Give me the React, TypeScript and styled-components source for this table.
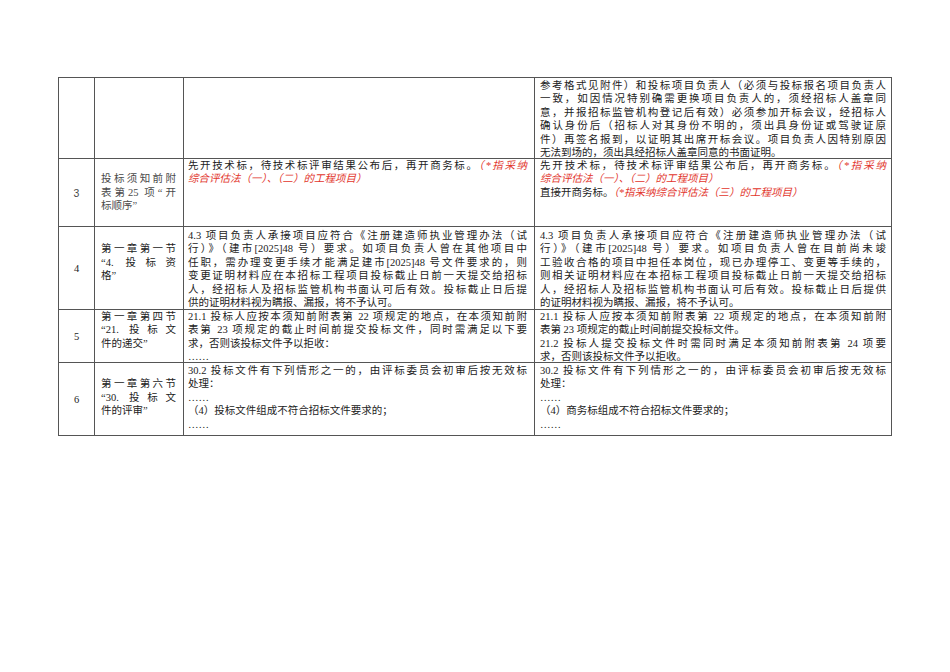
import React from "react";
import styled, { createGlobalStyle } from "styled-components";

const Global = createGlobalStyle`
  html, body { margin: 0; padding: 0; background: #ffffff; }
  body { font-family: "Liberation Serif", "Noto Sans CJK SC", serif; }
`;

const LH = 13.4;

const Page = styled.div`
  width: 950px;
  height: 672px;
  box-sizing: border-box;
  padding: 77px 0 0 58px;
  background: #ffffff;
`;

const Table = styled.div`
  display: grid;
  grid-template-columns: 35px 88px 350px 356px;
  grid-template-rows: 80px 67px 82px 52px 72px;
  gap: 1px;
  padding: 1px;
  width: max-content;
  background: #555555;
`;

const NumCell = styled.div<{ $sans?: boolean }>`
  display: flex;
  align-items: center;
  justify-content: center;
  background: #ffffff;
  font-family: ${(p) =>
    p.$sans
      ? `"Liberation Sans", "Noto Sans CJK SC", sans-serif`
      : `"Liberation Serif", "Noto Sans CJK SC", serif`};
  font-size: 10.5px;
  color: ${(p) => (p.$sans ? "#4a4a4a" : "#222222")};
`;

const TitleCell = styled.div<{ $pt: number; $muted?: boolean }>`
  background: #ffffff;
  box-sizing: border-box;
  padding: ${(p) => p.$pt}px 7px 0 6px;
  overflow: hidden;
  font-size: 10.5px;
  color: ${(p) => (p.$muted ? "#4a4a4a" : "#222222")};
`;

const TextCell = styled.div<{ $pt: number; $pl: number; $pr: number }>`
  background: #ffffff;
  box-sizing: border-box;
  padding: ${(p) => p.$pt}px ${(p) => p.$pr}px 0 ${(p) => p.$pl}px;
  overflow: hidden;
  font-size: 10.5px;
  color: #222222;
`;

const TextLine = styled.div<{ $justify: boolean }>`
  height: ${LH}px;
  line-height: ${LH}px;
  text-align: ${(p) => (p.$justify ? "justify" : "left")};
  text-align-last: ${(p) => (p.$justify ? "justify" : "left")};
`;

const RedText = styled.span`
  color: #e2352c;
  font-style: italic;
`;

type Seg = { text: string; red?: boolean };
type Line = { segs: Seg[]; justify: boolean };

const toSegs = (parts: (string | Seg)[]): Seg[] =>
  parts.map((s) => (typeof s === "string" ? { text: s } : s));
const J = (...parts: (string | Seg)[]): Line => ({ segs: toSegs(parts), justify: true });
const P = (...parts: (string | Seg)[]): Line => ({ segs: toSegs(parts), justify: false });
const R = (text: string): Seg => ({ text, red: true });

type Row = {
  pt: number;
  num: string;
  sans?: boolean;
  title: Line[];
  titleOffset: number;
  left: Line[];
  right: Line[];
};

const rows: Row[] = [
  {
    pt: 1,
    num: "",
    title: [],
    titleOffset: 0,
    left: [],
    right: [
      J("参考格式见附件）和投标项目负责人（必须与投标报名项目负责人"),
      J("一致，如因情况特别确需更换项目负责人的，须经招标人盖章同"),
      J("意，并报招标监管机构登记后有效）必须参加开标会议，经招标人"),
      J("确认身份后（招标人对其身份不明的，须出具身份证或驾驶证原"),
      J("件）再签名报到，以证明其出席开标会议。项目负责人因特别原因"),
      P("无法到场的，须出具经招标人盖章同意的书面证明。"),
    ],
  },
  {
    pt: 0,
    num: "3",
    sans: true,
    title: [J("投标须知前附"), J("表第25 项“开"), P("标顺序”")],
    titleOffset: 1,
    left: [
      J("先开技术标，待技术标评审结果公布后，再开商务标。", R("（*指采纳")),
      P(R("综合评估法（一）、（二）的工程项目）")),
    ],
    right: [
      J("先开技术标，待技术标评审结果公布后，再开商务标。", R("（*指采纳")),
      P(R("综合评估法（一）、（二）的工程项目）")),
      P("直接开商务标。", R("（*指采纳综合评估法（三）的工程项目）")),
    ],
  },
  {
    pt: 2,
    num: "4",
    title: [J("第一章第一节"), J("“4. 投标资"), P("格”")],
    titleOffset: 1,
    left: [
      J("4.3 项目负责人承接项目应符合《注册建造师执业管理办法（试"),
      J("行）》（建市[2025]48 号）要求。如项目负责人曾在其他项目中"),
      J("任职，需办理变更手续才能满足建市[2025]48 号文件要求的，则"),
      J("变更证明材料应在本招标工程项目投标截止日前一天提交给招标"),
      J("人，经招标人及招标监管机构书面认可后有效。投标截止日后提"),
      P("供的证明材料视为瞒报、漏报，将不予认可。"),
    ],
    right: [
      J("4.3 项目负责人承接项目应符合《注册建造师执业管理办法（试"),
      J("行）》（建市[2025]48 号）要求。如项目负责人曾在目前尚未竣"),
      J("工验收合格的项目中担任本岗位，现已办理停工、变更等手续的，"),
      J("则相关证明材料应在本招标工程项目投标截止日前一天提交给招标"),
      J("人，经招标人及招标监管机构书面认可后有效。投标截止日后提供"),
      P("的证明材料视为瞒报、漏报，将不予认可。"),
    ],
  },
  {
    pt: 0,
    num: "5",
    title: [J("第一章第四节"), J("“21. 投标文"), P("件的递交”")],
    titleOffset: 0,
    left: [
      J("21.1 投标人应按本须知前附表第 22 项规定的地点，在本须知前附"),
      J("表第 23 项规定的截止时间前提交投标文件，同时需满足以下要"),
      P("求，否则该投标文件予以拒收："),
      P("……"),
    ],
    right: [
      J("21.1 投标人应按本须知前附表第 22 项规定的地点，在本须知前附"),
      P("表第 23 项规定的截止时间前提交投标文件。"),
      J("21.2 投标人提交投标文件时需同时满足本须知前附表第 24 项要"),
      P("求，否则该投标文件予以拒收。"),
    ],
  },
  {
    pt: 1,
    num: "6",
    title: [J("第一章第六节"), J("“30. 投标文"), P("件的评审”")],
    titleOffset: 1,
    left: [
      J("30.2 投标文件有下列情形之一的，由评标委员会初审后按无效标"),
      P("处理："),
      P("……"),
      P("（4）投标文件组成不符合招标文件要求的；"),
      P("……"),
    ],
    right: [
      J("30.2 投标文件有下列情形之一的，由评标委员会初审后按无效标"),
      P("处理："),
      P("……"),
      P("（4）商务标组成不符合招标文件要求的；"),
      P("……"),
    ],
  },
];

const renderLines = (lines: Line[]) =>
  lines.map((ln, i) => (
    <TextLine key={i} $justify={ln.justify}>
      {ln.segs.map((s, k) =>
        s.red ? <RedText key={k}>{s.text}</RedText> : <React.Fragment key={k}>{s.text}</React.Fragment>
      )}
    </TextLine>
  ));

export default function App() {
  return (
    <Page>
      <Global />
      <Table>
        {rows.map((r, i) => (
          <React.Fragment key={i}>
            <NumCell $sans={r.sans}>{r.num}</NumCell>
            <TitleCell $pt={r.pt + r.titleOffset * LH} $muted={r.sans}>
              {renderLines(r.title)}
            </TitleCell>
            <TextCell $pt={r.pt} $pl={4} $pr={7}>
              {renderLines(r.left)}
            </TextCell>
            <TextCell $pt={r.pt} $pl={5} $pr={5}>
              {renderLines(r.right)}
            </TextCell>
          </React.Fragment>
        ))}
      </Table>
    </Page>
  );
}
